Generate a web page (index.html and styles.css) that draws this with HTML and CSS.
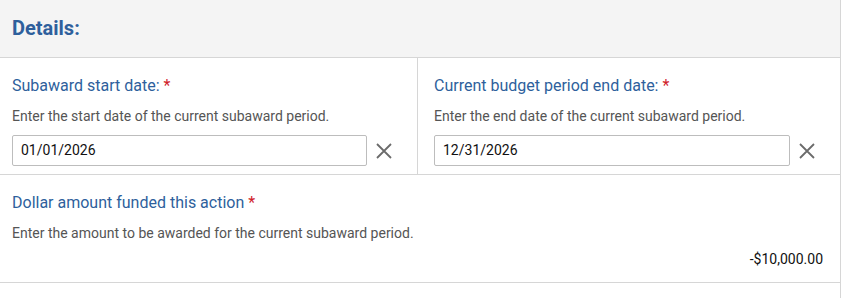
FILE: index.html
```html
<!DOCTYPE html>
<html>
<head>
<meta charset="utf-8">
<link rel="stylesheet" href="styles.css">
</head>
<body>
<div class="panel">
  <div class="panel-header"><h2 class="title">Details:</h2></div>
  <div class="row row-dates">
    <div class="cell cell-left">
      <div class="label">Subaward start date: <span class="req">*</span></div>
      <div class="help">Enter the start date of the current subaward period.</div>
      <div class="field">
        <div class="input">01/01/2026</div>
        <svg class="clear" width="16" height="16" viewBox="0 0 16 16"><path d="M1 1L15 15M15 1L1 15" stroke="#6b6b6b" stroke-width="1.8" fill="none"/></svg>
      </div>
    </div>
    <div class="cell cell-right">
      <div class="label">Current budget period end date: <span class="req">*</span></div>
      <div class="help">Enter the end date of the current subaward period.</div>
      <div class="field">
        <div class="input">12/31/2026</div>
        <svg class="clear" width="16" height="16" viewBox="0 0 16 16"><path d="M1 1L15 15M15 1L1 15" stroke="#6b6b6b" stroke-width="1.8" fill="none"/></svg>
      </div>
    </div>
  </div>
  <div class="row row-amount">
    <div class="label">Dollar amount funded this action <span class="req">*</span></div>
    <div class="help">Enter the amount to be awarded for the current subaward period.</div>
    <div class="amount">-$10,000.00</div>
  </div>
  <div class="row-next"></div>
</div>
</body>
</html>
```
FILE: styles.css
```css
html, body {
  margin: 0;
  padding: 0;
  background: #fff;
}
body {
  font-family: Roboto, "Liberation Sans", sans-serif;
  color: #222;
}
.panel {
  width: 840px;
  border-right: 1px solid #d6d6d6;
}
.panel-header {
  background: #f4f4f4;
  height: 57px;
  border-bottom: 1px solid #d6d6d6;
  padding-left: 12px;
  display: flex;
  align-items: center;
}
.title {
  margin: 0;
  font-size: 20px;
  font-weight: 700;
  color: #2e5f9c;
  position: relative;
  top: -1px;
}
.row {
  border-bottom: 1px solid #d6d6d6;
}
.row-dates {
  display: grid;
  grid-template-columns: 418px 1fr;
  height: 116px;
}
.cell {
  padding: 18px 0 0 12px;
}
.cell-left {
  border-right: 1px solid #d6d6d6;
}
.cell-right {
  padding-left: 16px;
}
.label {
  font-size: 16px;
  line-height: 20px;
  color: #2e5f9c;
}
.req {
  color: #d0202a;
}
.help {
  margin-top: 11px;
  font-size: 14px;
  line-height: 18px;
  color: #555;
}
.field {
  margin-top: 10px;
  display: flex;
  align-items: center;
}
.input {
  width: 345px;
  height: 29px;
  border: 1px solid #bdbdbd;
  border-radius: 2px;
  padding-left: 8px;
  font-size: 14px;
  line-height: 29px;
  color: #111;
}
.cell-right .input {
  width: 346px;
}
.clear {
  margin-left: 9px;
}
.row-amount {
  height: 108px;
  padding: 18px 17px 0 12px;
  box-sizing: border-box;
}
.amount {
  margin-top: 8px;
  text-align: right;
  font-size: 14px;
  line-height: 18px;
  color: #111;
}
.row-next {
  height: 20px;
}
```
